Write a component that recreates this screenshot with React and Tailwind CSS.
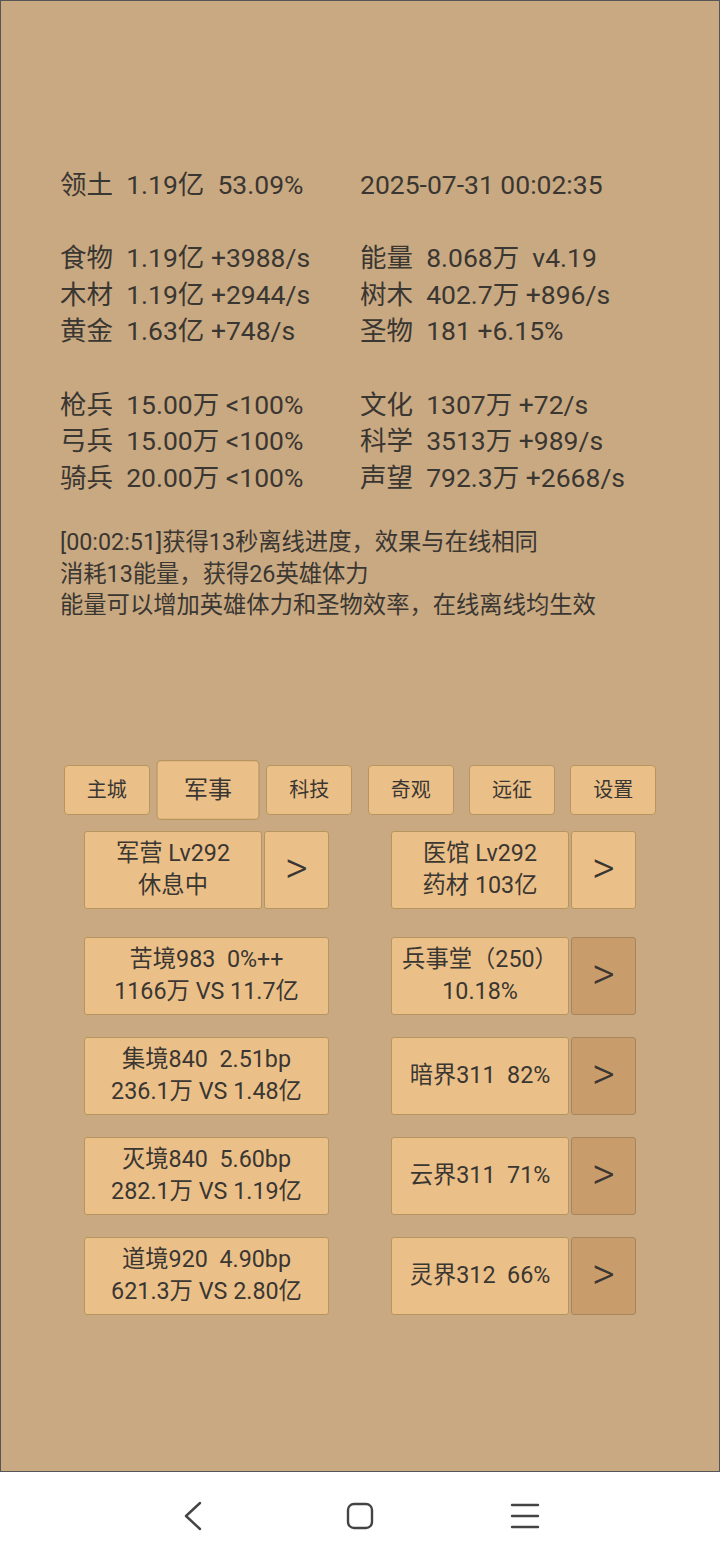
import React from 'react';

const STATS = [
  ['领土  1.19亿  53.09%', '2025-07-31 00:02:35'],
  null,
  ['食物  1.19亿 +3988/s', '能量  8.068万  v4.19'],
  ['木材  1.19亿 +2944/s', '树木  402.7万 +896/s'],
  ['黄金  1.63亿 +748/s', '圣物  181 +6.15%'],
  null,
  ['枪兵  15.00万 <100%', '文化  1307万 +72/s'],
  ['弓兵  15.00万 <100%', '科学  3513万 +989/s'],
  ['骑兵  20.00万 <100%', '声望  792.3万 +2668/s'],
];

const MESSAGES = [
  '[00:02:51]获得13秒离线进度，效果与在线相同',
  '消耗13能量，获得26英雄体力',
  '能量可以增加英雄体力和圣物效率，在线离线均生效',
];

const TABS = ['主城', '军事', '科技', '奇观', '远征', '设置'];

const ROWS = [
  { left: ['苦境983  0%++', '1166万 VS 11.7亿'], right: ['兵事堂（250）', '10.18%'] },
  { left: ['集境840  2.51bp', '236.1万 VS 1.48亿'], right: ['暗界311  82%'] },
  { left: ['灭境840  5.60bp', '282.1万 VS 1.19亿'], right: ['云界311  71%'] },
  { left: ['道境920  4.90bp', '621.3万 VS 2.80亿'], right: ['灵界312  66%'] },
];

const box = 'flex flex-col items-center justify-center border border-[#b8955f] rounded-[3px] bg-[#ebc088] text-[23.3px] leading-[31.5px] whitespace-pre';

function Lines({ lines }) {
  return lines.map((l) => <span key={l}>{l}</span>);
}

function Arrow({ dark }) {
  return (
    <div className={`w-[65px] h-[78px] flex items-center justify-center border rounded-[3px] text-[44px] font-light leading-none pb-[4px] ${dark ? 'bg-[#c99c6b] border-[#a8845a]' : 'bg-[#ebc088] border-[#b8955f]'}`}>
      &gt;
    </div>
  );
}

export default function App() {
  return (
    <div className="w-[720px] h-[1560px] flex flex-col bg-white font-[Roboto,'Noto_Sans_CJK_SC',sans-serif] text-[#3a3632]">
      <div className="h-[1472px] shrink-0 border border-[#555] bg-[#c9a981] pt-[166px]">
        {/* stats */}
        <div className="pl-[59px] text-[26.5px] leading-[36.6px]">
          {STATS.map((row, i) =>
            row ? (
              <div key={i} className="flex whitespace-pre">
                <span className="w-[300px]">{row[0]}</span>
                <span>{row[1]}</span>
              </div>
            ) : (
              <div key={i} className="h-[36.6px]" />
            )
          )}
        </div>

        {/* log */}
        <div className="pl-[59px] mt-[31px] text-[23.3px] leading-[31.5px]">
          {MESSAGES.map((m) => <div key={m}>{m}</div>)}
        </div>

        {/* tabs */}
        <div className="mt-[143px] flex justify-center gap-[15.3px]">
          {TABS.map((t) => (
            <div
              key={t}
              className={`w-[86px] h-[50px] flex items-center justify-center border border-[#b8955f] rounded-[4px] bg-[#ebc088] text-[20px] ${t === '军事' ? 'scale-[1.2]' : ''}`}
            >
              {t}
            </div>
          ))}
        </div>

        {/* buildings */}
        <div className="mt-[16px] flex flex-col items-center">
          <div className="flex gap-[62px]">
            <div className="flex gap-[2px]">
              <div className={`${box} w-[178px] h-[78px]`}><Lines lines={['军营 Lv292', '休息中']} /></div>
              <Arrow />
            </div>
            <div className="flex gap-[2px]">
              <div className={`${box} w-[178px] h-[78px]`}><Lines lines={['医馆 Lv292', '药材 103亿']} /></div>
              <Arrow />
            </div>
          </div>

          {ROWS.map((r, i) => (
            <div key={i} className={`flex gap-[62px] ${i === 0 ? 'mt-[28px]' : 'mt-[22px]'}`}>
              <div className={`${box} w-[245px] h-[78px]`}><Lines lines={r.left} /></div>
              <div className="flex gap-[2px]">
                <div className={`${box} w-[178px] h-[78px]`}><Lines lines={r.right} /></div>
                <Arrow dark />
              </div>
            </div>
          ))}
        </div>
      </div>

      {/* nav bar */}
      <div className="flex-1 flex items-center justify-center gap-[136px] text-[#444]">
        <svg width="30" height="30" viewBox="0 0 30 30" fill="none" stroke="currentColor" strokeWidth="2.4" strokeLinecap="round" strokeLinejoin="round">
          <path d="M20 2 L6 15 L20 28" />
        </svg>
        <svg width="28" height="28" viewBox="0 0 28 28" fill="none" stroke="currentColor" strokeWidth="2.4">
          <rect x="2" y="2" width="24" height="24" rx="6" />
        </svg>
        <svg width="30" height="30" viewBox="0 0 30 30" fill="none" stroke="currentColor" strokeWidth="2.4" strokeLinecap="round">
          <path d="M2 4 H28 M2 15 H28 M2 26 H28" />
        </svg>
      </div>
    </div>
  );
}
